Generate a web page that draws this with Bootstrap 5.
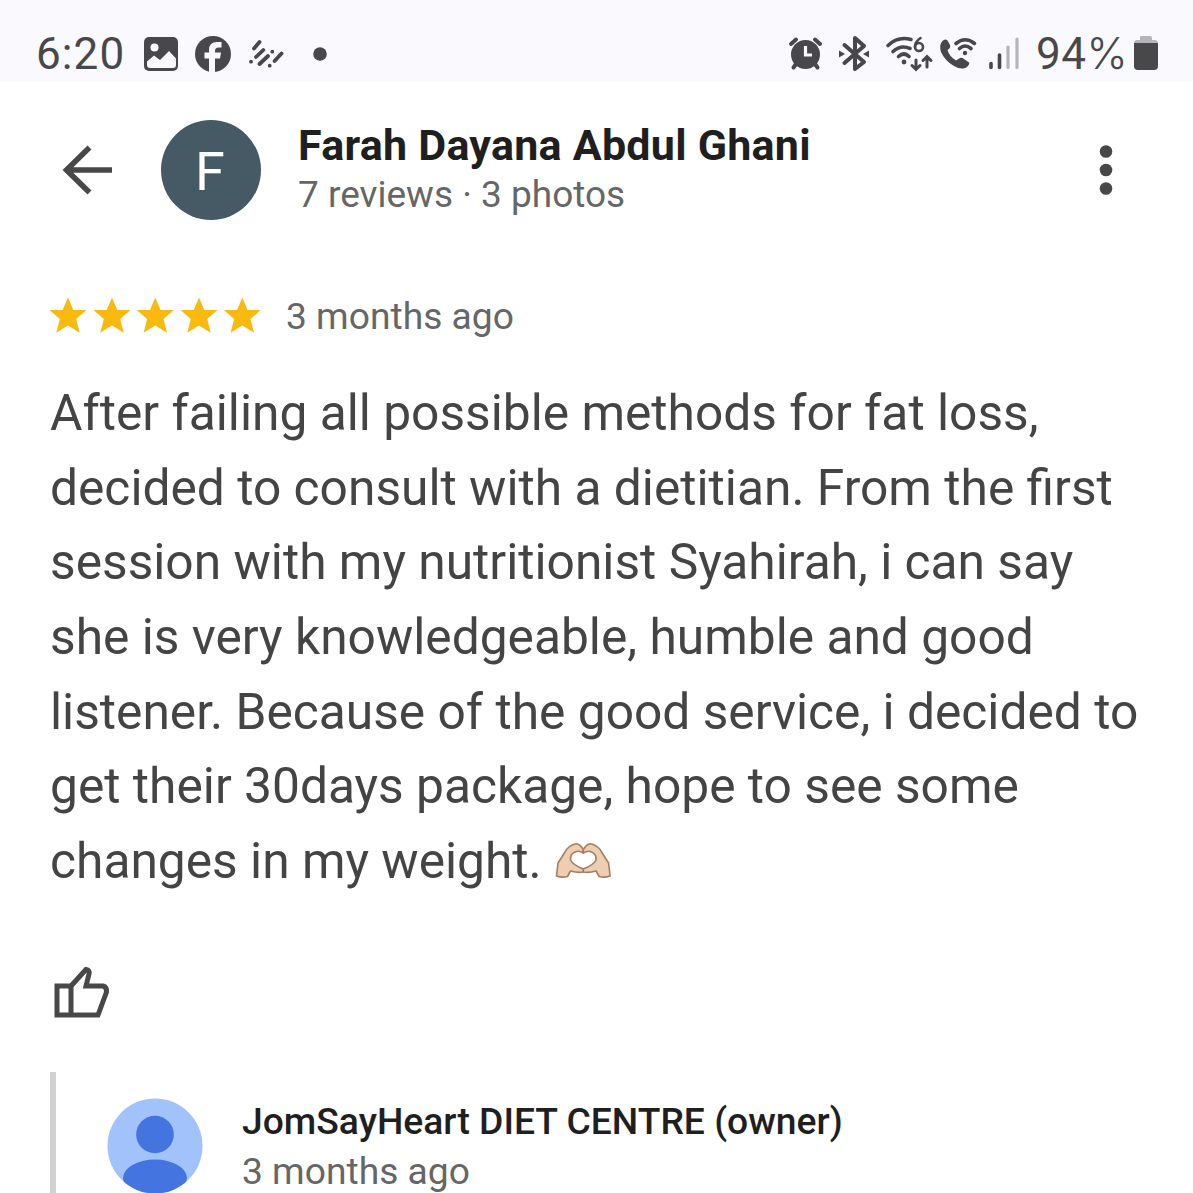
<!DOCTYPE html>
<html lang="en">
<head>
<meta charset="utf-8">
<meta name="viewport" content="width=device-width, initial-scale=1">
<title>Review</title>
<link href="https://cdn.jsdelivr.net/npm/bootstrap@5.3.0/dist/css/bootstrap.min.css" rel="stylesheet">
<style>
body{font-family:Roboto,"Liberation Sans",sans-serif;background:#fff;color:#444;height:1193px;overflow:hidden}
svg{display:block;flex:none}
.status{height:82px;background:#f9f9fe;padding:25px 34px 0 36px;color:#48484a}
.clock{font-size:44px;line-height:59px;white-space:nowrap;height:57px}
.time{width:107px;letter-spacing:1.1px}
.pct{width:98px;letter-spacing:.5px}
.pct span{font-family:Inter,sans-serif;font-weight:300;font-size:44px;line-height:1px;letter-spacing:0}
.ink{fill:#48484a}
.head{height:157px;padding:38px 0 0 62px}
.avatar{width:100px;height:100px;background:#455a64;color:#fff;font-size:54px;line-height:104px;margin-left:49px;text-indent:-2px}
.who{margin-left:37px;width:796px}
.name{font-size:43px;letter-spacing:.25px;line-height:50px;font-weight:700;color:#1f1f1f;white-space:nowrap}
.meta{font-size:37px;line-height:50px;color:#666;white-space:nowrap}
.ago{font-size:37.2px}
.rating{height:72px;margin-top:41px;padding-left:50px}
.body-text{font-size:49.7px;line-height:74.7px;color:#444;padding-left:50px;margin-top:24px}
.body-text>div{white-space:nowrap;height:74.7px}
.like{margin:63px 0 0 50px}
.reply{border-left:6px solid #d2d2d2;height:121px;margin:50px 0 0 50px;padding:26px 0 0 51px}
.reply-who{width:951px}
.owner{font-size:37.25px;line-height:46px;height:48px;font-weight:500;color:#1f1f1f;white-space:nowrap}
</style>
</head>
<body>
<header class="status d-flex">
  <div class="clock time">6:20</div>
  <svg width="190" height="57" viewBox="143 25 190 57">
    <rect x="144" y="37" width="34" height="34" rx="5" class="ink"/>
    <circle cx="154.500" cy="47.500" r="4" fill="#f9f9fe"/>
    <path d="M147 61.500L154 55.500L160 60L169 51L176 58.500V65Q176 68 173 68H150Q147 68 147 65Z" fill="#f9f9fe"/>
    <circle cx="213" cy="54" r="18" class="ink"/>
    <path d="M209 73V58.500H204.500V52.500H209V50Q209 42 217 42H221.500V47.500H218.500Q215 47.500 215 51V52.500H221L220 58.500H215V73Z" fill="#f9f9fe"/>
    <g fill="none" stroke="#48484a" stroke-width="3.800" stroke-linecap="round"><path d="M254 48.500L259.500 42M256 57L263.300 50M259.500 64L268 56M274.600 61L281.500 53.500M251 61.700h.01M272.300 51.700h.01M269.700 65.700h.01"/></g>
    <circle cx="320" cy="54" r="6.800" class="ink"/>
  </svg>
  <svg class="ms-auto" width="248" height="57" viewBox="788 25 248 57">
    <circle cx="805.500" cy="54.500" r="14.500" class="ink"/>
    <g fill="none" stroke="#48484a" stroke-width="4" stroke-linecap="round"><path d="M791 44L796 39.500M815 39.500L820 44M796 64L793.500 67.500M815 64L817.500 67.500"/></g>
    <path d="M805.500 46V55H812" fill="none" stroke="#f9f9fe" stroke-width="3.200"/>
    <path d="M844.500 45L864 62L855 69V38L864 46L844.500 63" fill="none" stroke="#48484a" stroke-width="4" stroke-linejoin="round" stroke-linecap="round"/>
    <path d="M839 50.500L845 54L839 57.500ZM869 50.500L863 54L869 57.500Z" class="ink"/>
    <g fill="none" stroke="#48484a" stroke-width="3.600" stroke-linecap="round">
      <path d="M888 45.500Q898 36 911 39.500M893 51.500Q901 44.500 910 48.500M898.500 56.500Q904 51.500 909 56.500"/>
      <path d="M916 60V69M912 65.500L916 69.500L920 65.500M927 67V57M923 60.500L927 56.500L931 60.500" stroke-width="3"/>
      <path d="M920.500 38Q914.800 42 915 47" stroke-width="2.600"/><circle cx="919" cy="47" r="4" stroke-width="2.600"/>
      <path d="M956 43.500Q965 36 974.500 43.500M959.500 48.500Q965 43.500 971 48.500"/>
    </g>
    <circle cx="904" cy="62" r="2.400" class="ink"/><circle cx="965" cy="53" r="2.200" class="ink"/>
    <path d="M942 41.500Q945 38 947.500 40.500L950 45Q951 48 947.500 50Q949 56 956 60.500L960 58Q962 57 964 59L969 62.500Q970 64 967 67Q962 70.500 954 66Q945 61 941 52Q939 45 942 41.500Z" class="ink"/>
    <path d="M991 63.500V67.500M999.500 55V67.500" stroke="#48484a" stroke-width="3.600" stroke-linecap="round"/>
    <path d="M1008 47V67.500M1017 39V67.500" stroke="#b5b5b9" stroke-width="3.200" stroke-linecap="round"/>
  </svg>
  <div class="clock pct">94<span>%</span></div>
  <svg width="25" height="57" viewBox="1134 25 25 57"><path d="M1140 37Q1140 36 1142 36H1150Q1152 36 1152 38V40H1155Q1158 40 1158 44H1134Q1134 40 1137 40H1140Z" fill="#b5b5b9"/><path d="M1134 43H1158V66Q1158 70 1154 70H1138Q1134 70 1134 66Z" class="ink"/></svg>
</header>
<section class="head d-flex">
  <svg width="50" height="100" viewBox="62 120 50 100"><path d="M112 170H66M89.500 147.500L66.500 170L89.500 192.500" fill="none" stroke="#484848" stroke-width="5.600"/></svg>
  <div class="avatar rounded-circle text-center">F</div>
  <div class="who">
    <div class="name">Farah Dayana Abdul Ghani</div>
    <div class="meta">7 reviews · 3 photos</div>
  </div>
  <svg width="24" height="100" viewBox="1094 120 24 100" fill="#484848"><circle cx="1106" cy="151.500" r="6.300"/><circle cx="1106" cy="170" r="6.300"/><circle cx="1106" cy="188.500" r="6.300"/></svg>
</section>
<section class="rating d-flex align-items-center">
  <svg width="212" height="72" viewBox="50 280 212 72">
    <defs><path id="star" d="M0 -19L5.300 -6.500H18.500L8.200 2.500L11.700 16.300L0 9L-11.700 16.300L-8.200 2.500L-18.500 -6.500H-5.300Z"/></defs>
    <g fill="#f9ba10"><use href="#star" x="68" y="316.500"/><use href="#star" x="112" y="316.500"/><use href="#star" x="155.300" y="316.500"/><use href="#star" x="199" y="316.500"/><use href="#star" x="242.300" y="316.500"/></g>
  </svg>
  <div class="meta ago ms-4">3 months ago</div>
</section>
<main class="body-text">
  <div>After failing all possible methods for fat loss,</div>
  <div>decided to consult with a dietitian. From the first</div>
  <div>session with my nutritionist Syahirah, i can say</div>
  <div>she is very knowledgeable, humble and good</div>
  <div>listener. Because of the good service, i decided to</div>
  <div>get their 30days package, hope to see some</div>
  <div class="d-flex"><span>changes in my weight.</span>
    <svg class="ms-2" width="62" height="74" viewBox="550 824 62 74">
      <path id="hand" d="M556.500 876L558 863Q562 857 565 852Q568 846 575 844Q580 843 583.300 850V853Q579 850 575 852Q570 854 570.500 860Q573 865 583.300 869V872Q578 873 570.500 871L567.500 876.500Q562 878 556.500 876Z" fill="#edceb0" stroke="#a47f62" stroke-width="1.600" stroke-linejoin="round"/>
      <use href="#hand" transform="translate(1166.600 0) scale(-1 1)"/>
    </svg>
  </div>
</main>
<svg class="like" width="62" height="60" viewBox="50 962 62 60"><path d="M57 986H71V1015H57ZM71 986L86 969.500Q90 970 89 974L86 986H103Q107 987 106.500 992L98 1015H71" fill="none" stroke="#484848" stroke-width="5"/></svg>
<section class="reply d-flex">
  <svg width="96" height="96" viewBox="107 1098 96 96"><defs><clipPath id="disc"><circle cx="155" cy="1146" r="47.500"/></clipPath></defs><circle cx="155" cy="1146" r="47.500" fill="#a1c2fa"/><g fill="#4374e0" clip-path="url(#disc)"><circle cx="155" cy="1134.500" r="18.800"/><ellipse cx="155" cy="1178" rx="32" ry="18.500"/></g></svg>
  <div class="reply-who ms-auto">
    <div class="owner">JomSayHeart DIET CENTRE (owner)</div>
    <div class="meta ago">3 months ago</div>
  </div>
</section>
<script src="https://cdn.jsdelivr.net/npm/bootstrap@5.3.0/dist/js/bootstrap.bundle.min.js"></script>
</body>
</html>
